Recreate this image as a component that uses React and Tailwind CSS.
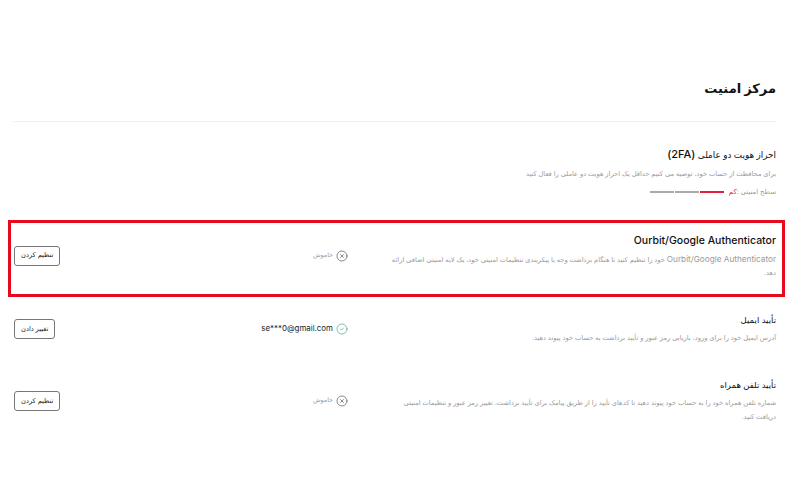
import React from 'react';
import { CircleX, CircleCheck } from 'lucide-react';

const rows = [
    {
        title: 'تأیید ایمیل',
        desc: 'آدرس ایمیل خود را برای ورود، بازیابی رمز عبور و تأیید برداشت به حساب خود پیوند دهید.',
        email: 'se***0@gmail.com',
        action: 'تغییر دادن',
    },
    {
        title: 'تأیید تلفن همراه',
        desc: 'شماره تلفن همراه خود را به حساب خود پیوند دهید تا کدهای تأیید را از طریق پیامک برای تأیید برداشت، تغییر رمز عبور و تنظیمات امنیتی دریافت کنید.',
        action: 'تنظیم کردن',
    },
];

const Status = ({ email }) => (
    <div className="w-[100px] shrink-0 flex items-center gap-[3px]">
        {email ? (
            <>
                <CircleCheck size={12} strokeWidth={1.25} className="text-[#2f9e6e] shrink-0" />
                <span dir="ltr" className="text-[7.9px] text-[#222] whitespace-nowrap">{email}</span>
            </>
        ) : (
            <>
                <CircleX size={12} strokeWidth={1.25} className="text-[#444] shrink-0" />
                <span className="text-[6.3px] text-[#999]">خاموش</span>
            </>
        )}
    </div>
);

const Action = ({ label }) => (
    <div className="flex-1 flex justify-end">
        <button className="h-[20px] px-[6px] rounded-[3px] border border-[#777] text-[6.7px] text-[#222] bg-white whitespace-nowrap">
            {label}
        </button>
    </div>
);

const Row = ({ title, desc, email, action }) => (
    <div className="flex items-center h-[64px]">
        <div className="w-[390px] shrink-0">
            <div className="text-[8.5px] leading-[14px] text-[#111]">{title}</div>
            <p className="mt-[4px] text-[6.7px] leading-[14px] text-[#9a9a9a]">{desc}</p>
        </div>
        <div className="w-[38px] shrink-0" />
        <Status email={email} />
        <Action label={action} />
    </div>
);

const App = () => {
    return (
        <div dir="rtl" className="w-[800px] h-[500px] overflow-hidden bg-white font-['Inter','DejaVu_Sans',sans-serif] pt-[76px] pr-[24px] pl-[13px]">
            <h1 className="text-[13px] leading-[24px] font-bold text-[#111]">مرکز امنیت</h1>
            <div className="mt-[21px] h-px bg-[#f0f0f0]" />

            <div className="mt-[25px]">
                <div className="text-[8.8px] leading-[14px] text-[#111]">
                    احراز هویت دو عاملی <span className="text-[11px] font-medium">(2FA)</span>
                </div>
                <p className="mt-[6px] text-[6.7px] leading-[12px] text-[#9a9a9a]">
                    برای محافظت از حساب خود، توصیه می کنیم حداقل یک احراز هویت دو عاملی را فعال کنید
                </p>
                <div className="mt-[6px] flex items-center gap-[5px] text-[6.9px] leading-[12px] text-[#9a9a9a]">
                    <span>سطح امنیتی :<span className="text-[#d9304f]">کم</span></span>
                    <div className="flex gap-[1px]">
                        <span className="w-[24px] h-[2px] bg-[#e2203a]" />
                        <span className="w-[24px] h-[2px] bg-[#aaa]" />
                        <span className="w-[24px] h-[2px] bg-[#aaa]" />
                    </div>
                </div>
            </div>

            {/* highlighted row */}
            <div className="mt-[22px] -ml-[5px] -mr-[9px] h-[77px] border-[3px] border-[#e8091c] pr-[6px] pl-[3px] flex items-center">
                <div className="w-[390px] shrink-0 -mt-[4px]">
                    <div dir="ltr" className="text-right text-[10.5px] leading-[14px] font-medium text-[#111]">Ourbit/Google Authenticator</div>
                    <p className="mt-[5px] text-[6.7px] leading-[13px] text-[#9a9a9a]">
                        <span className="text-[8.2px]">Ourbit/Google Authenticator</span> خود را تنظیم کنید تا هنگام برداشت وجه یا پیکربندی تنظیمات امنیتی خود، یک لایه امنیتی اضافی ارائه دهد.
                    </p>
                </div>
                <div className="w-[38px] shrink-0" />
                <div className="flex flex-1 items-center -mt-[6px]">
                    <Status />
                    <Action label="تنظیم کردن" />
                </div>
            </div>

            <div className="flex flex-col gap-[8px] pl-[1px]">
                {rows.map((row) => <Row key={row.title} {...row} />)}
            </div>
        </div>
    );
};

export default App;
